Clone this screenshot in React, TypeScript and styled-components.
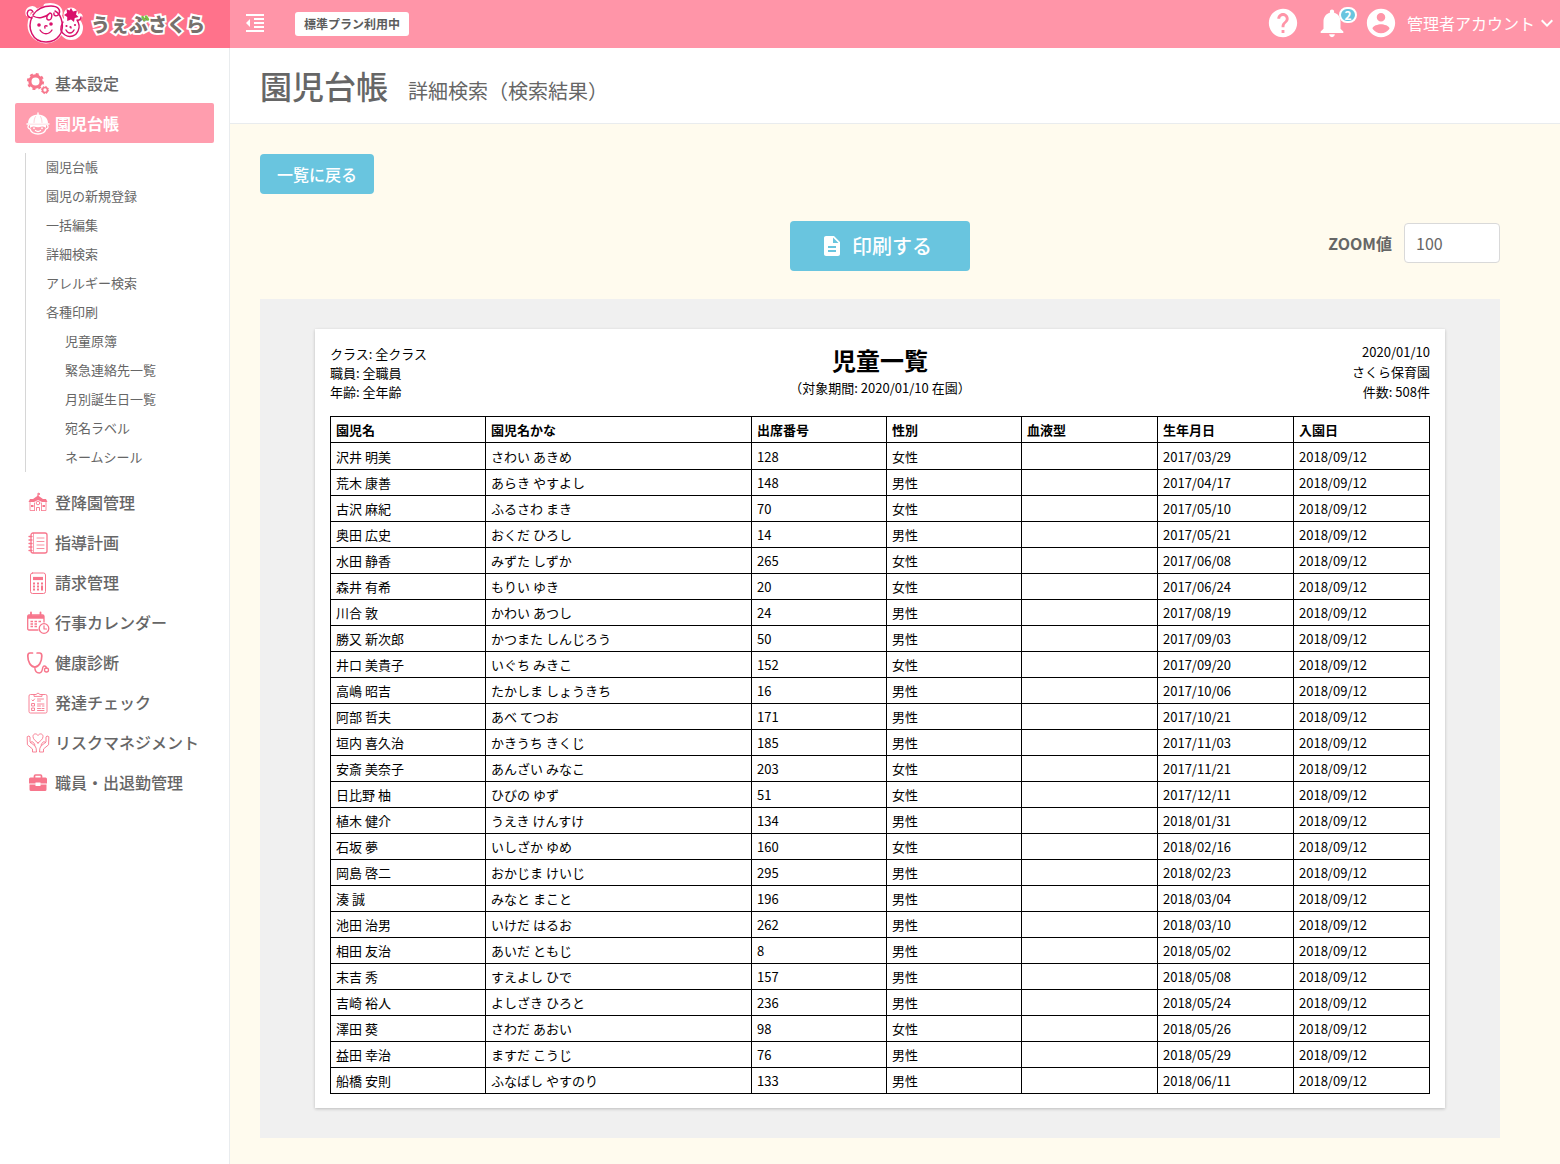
import React, { useState } from 'react';
import styled, { createGlobalStyle, css } from 'styled-components';

const color = {
  brand: '#ff728b',
  header: '#ff95a8',
  active: '#ff9dae',
  icon: '#f7768c',
  blue: '#69c5df',
  text: '#666',
  cream: '#fffbee',
  line: '#e9ecee',
};

const GlobalStyle = createGlobalStyle`
  *, *::before, *::after { box-sizing: border-box; }
  body {
    margin: 0;
    background: #fff;
    color: ${color.text};
    font-family: 'Noto Sans CJK JP', 'Liberation Sans', sans-serif;
    font-size: 16px;
  }
  button, input { font: inherit; color: inherit; }
  a { color: inherit; text-decoration: none; }
`;

/* ---------- header ---------- */

const Header = styled.header`
  display: flex;
  height: 48px;
  background: ${color.header};
  color: #fff;
`;

const Brand = styled.a`
  display: flex;
  align-items: center;
  gap: 8px;
  width: 230px;
  padding-left: 25px;
  background: ${color.brand};
`;

const BrandName = styled.span`
  position: relative;
  font-size: 19px;
  line-height: 28px;
  font-weight: 900;
  color: #77706c;
  -webkit-text-stroke: 4px #fff;
  paint-order: stroke fill;
`;

const Leaf = styled.svg`
  position: absolute;
  left: 50px;
  top: 5px;
`;

const HeaderBar = styled.div`
  flex: 1;
  display: flex;
  align-items: center;
  padding: 0 1px 2px 13px;
`;

const IconButton = styled.button`
  position: relative;
  display: flex;
  padding: 0;
  border: 0;
  background: none;
  cursor: pointer;
`;

const PlanButton = styled.button`
  height: 24px;
  margin: 2px auto 0 28px;
  padding: 0 9px;
  border: 0;
  border-radius: 3px;
  background: #fff;
  color: #5c5c5c;
  font-size: 12px;
  line-height: 24px;
  font-weight: 700;
`;

const HeaderTools = styled.div`
  display: flex;
  align-items: center;
  gap: 15px;
`;

const Count = styled.span`
  position: absolute;
  top: 1px;
  right: -8px;
  width: 18px;
  height: 16px;
  border: 2px solid #fff;
  border-radius: 8px;
  background: ${color.blue};
  font-size: 12px;
  line-height: 12px;
  font-weight: 700;
  text-align: center;
  color: #fff;
`;

const Account = styled.button`
  display: flex;
  align-items: center;
  padding: 0;
  border: 0;
  background: none;
  color: #fff;
  line-height: 24px;
`;

const AccountName = styled.span`
  margin-left: 9px;
`;

/* ---------- frame ---------- */

const Body = styled.div`
  display: flex;
  min-height: calc(100vh - 48px);
`;

const Sidebar = styled.nav`
  flex: none;
  width: 230px;
  padding: 15px;
  border-right: 1px solid ${color.line};
  background: #fff;
`;

const Menu = styled.ul`
  margin: 0;
  padding: 0;
  list-style: none;
`;

const MenuLink = styled.a<{ $active?: boolean }>`
  display: flex;
  align-items: center;
  gap: 6px;
  height: 40px;
  padding-left: 12px;
  border-radius: 2px;
  line-height: 24px;
  font-weight: 500;
  white-space: nowrap;
  ${(p) =>
    p.$active &&
    css`
      background: ${color.active};
      color: #fff;
      font-weight: 700;
    `}
`;

const SubMenu = styled.ul`
  margin: 10px 0 10px 10px;
  padding: 0;
  border-left: 1px solid #d6d6d6;
  list-style: none;
`;

const SubLink = styled.a<{ $nested?: boolean }>`
  display: block;
  padding: 0 0 2px ${(p) => (p.$nested ? 39 : 20)}px;
  font-size: 13px;
  line-height: 27px;
`;

const MenuIcon = styled.svg`
  flex: none;
  width: 22px;
  height: 22px;
  overflow: visible;
  fill: none;
  stroke: currentColor;
  stroke-linecap: round;
  stroke-linejoin: round;
`;

const IconTint = styled.span<{ $active?: boolean }>`
  display: flex;
  padding-top: 2px;
  color: ${(p) => (p.$active ? '#fff' : color.icon)};
`;

/* ---------- page ---------- */

const Main = styled.main`
  flex: 1;
  min-width: 0;
  background: ${color.cream};
`;

const PageHead = styled.div`
  display: flex;
  align-items: baseline;
  gap: 20px;
  height: 76px;
  padding: 13px 30px 0;
  border-bottom: 1px solid ${color.line};
  background: #fff;
`;

const PageTitle = styled.h1`
  margin: 0;
  font-size: 32px;
  line-height: 48px;
  font-weight: 500;
`;

const PageSubtitle = styled.span`
  font-size: 20px;
  line-height: 30px;
`;

const Content = styled.div`
  padding: 30px 60px 26px 30px;
`;

const BackButton = styled.button`
  height: 40px;
  padding: 0 17px;
  border: 0;
  border-radius: 4px;
  background: ${color.blue};
  color: #fff;
  line-height: 24px;
  font-weight: 500;
`;

const Toolbar = styled.div`
  display: grid;
  grid-template-columns: 1fr auto 1fr;
  align-items: center;
  margin: 27px 0 28px;
`;

const PrintButton = styled.button`
  grid-column: 2;
  display: flex;
  align-items: center;
  gap: 8px;
  width: 180px;
  height: 50px;
  padding: 0 30px;
  border: 0;
  border-radius: 4px;
  background: ${color.blue};
  color: #fff;
  font-size: 20px;
  line-height: 30px;
  font-weight: 500;
`;

const ZoomField = styled.label`
  justify-self: end;
  display: flex;
  align-items: center;
  gap: 12px;
  padding-bottom: 6px;
  font-weight: 700;
`;

const ZoomInput = styled.input`
  width: 96px;
  height: 40px;
  padding: 0 11px;
  border: 1px solid #d9d9d9;
  border-radius: 4px;
  background: #fff;
  font-weight: 400;
`;

const Preview = styled.section`
  padding: 30px 55px;
  background: #f0f0f0;
`;

const Paper = styled.article`
  padding: 13px 15px 14px;
  background: #fff;
  box-shadow: 0 1px 3px rgba(0, 0, 0, 0.22);
  color: #000;
  font-size: 13px;
`;

const PaperHead = styled.div`
  display: grid;
  grid-template-columns: 1fr auto 1fr;
  height: 60px;
  margin-bottom: 14px;
`;

const Conditions = styled.div`
  align-self: center;
  line-height: 19px;
`;

const Heading = styled.div`
  text-align: center;
  line-height: 20px;
`;

const PaperTitle = styled.h2`
  margin: 0;
  font-size: 24px;
  line-height: 36px;
  font-weight: 700;
`;

const Issuer = styled.div`
  text-align: right;
  line-height: 20px;
`;

const Table = styled.table`
  width: 100%;
  table-layout: fixed;
  border-collapse: collapse;
  line-height: 20px;

  th, td {
    height: 26px;
    padding: 0 5px;
    border: 1px solid #000;
    text-align: left;
  }
  tbody tr:first-child td {
    height: 27px;
    padding-top: 2px;
  }
`;

const Col = styled.col<{ $w: number }>`
  width: ${(p) => p.$w}px;
`;

/* ---------- icons ---------- */

const Glyph = ({ d, size = 24 }: { d: string; size?: number }) => (
  <svg width={size} height={size} viewBox="0 0 24 24" fill="#fff" aria-hidden="true">
    <path d={d} />
  </svg>
);

const glyphs = {
  indent: 'M11 17h10v-2H11v2zm-8-5l4 4V8l-4 4zm0 9h18v-2H3v2zM3 3v2h18V3H3zm8 6h10V7H11v2zm0 4h10v-2H11v2z',
  help: 'M12 2C6.48 2 2 6.48 2 12s4.48 10 10 10 10-4.48 10-10S17.52 2 12 2zm1 17h-2v-2h2v2zm2.07-7.75l-.9.92C13.45 12.9 13 13.5 13 15h-2v-.5c0-1.1.45-2.1 1.17-2.83l1.24-1.26c.37-.36.59-.86.59-1.41 0-1.1-.9-2-2-2s-2 .9-2 2H8c0-2.21 1.79-4 4-4s4 1.79 4 4c0 .88-.36 1.68-.93 2.25z',
  bell: 'M12 22c1.1 0 2-.9 2-2h-4c0 1.1.89 2 2 2zm6-6v-5c0-3.07-1.64-5.64-4.5-6.32V4c0-.83-.67-1.5-1.5-1.5s-1.5.67-1.5 1.5v.68C7.63 5.36 6 7.92 6 11v5l-2 2v1h16v-1l-2-2z',
  account: 'M12 2C6.48 2 2 6.48 2 12s4.48 10 10 10 10-4.48 10-10S17.52 2 12 2zm0 3c1.66 0 3 1.34 3 3s-1.34 3-3 3-3-1.34-3-3 1.34-3 3-3zm0 14.2c-2.5 0-4.71-1.28-6-3.22.03-1.99 4-3.08 6-3.08 1.99 0 5.97 1.09 6 3.08-1.29 1.94-3.5 3.22-6 3.22z',
  expand: 'M16.59 8.59L12 13.17 7.41 8.59 6 10l6 6 6-6z',
  document: 'M14 2H6c-1.1 0-1.99.9-1.99 2L4 20c0 1.1.89 2 1.99 2H18c1.1 0 2-.9 2-2V8l-6-6zm2 16H8v-2h8v2zm0-4H8v-2h8v2zm-3-5V3.5L18.5 9H13z',
};

const BrandMark = () => (
  <svg width="58" height="44" viewBox="0 0 58 44" fill="none" strokeLinecap="round" aria-hidden="true">
    <g stroke="#fff" strokeWidth="5" fill="#fff">
      <circle cx="21" cy="23" r="16" />
      <circle cx="46" cy="26" r="9.5" />
      <path d="M3 12c-1-5 5-7 7-4M21 4c8-2 15 2 14 8M55 14l-3 3" />
      <circle cx="46" cy="13" r="5" />
    </g>
    <g stroke="#d9116b" strokeWidth="1.4">
      <path d="M7 15c-5 11 0 25 14 25 12 0 18-10 16-20-1-5-3-9-7-11" />
      <path d="M7 16c-4 0-6-4-4-7 2-2 4-1 5 1M8 13c4-6 11-9 18-9 7 0 10 4 8 8-2 3-6 2-5-1M8 14c5 3 12 2 17-3 3 0 2 7-1 7-3 0-3-4 0-6" />
      <path d="M38 20c-3 5-3 10 2 13 5 3 11 1 13-4 2-4 1-8-1-11M52 18c2 1 4-1 4-3" />
      <path d="M15 28c3 5 9 5 12 0M41 28c2 4 6 4 8 0M20 26q-1-3 2-2M45 25q1-1 1 1" />
    </g>
    <g fill="#d9116b">
      <circle cx="14" cy="23" r="1.800" />
      <circle cx="26" cy="22" r="1.800" />
      <circle cx="41.500" cy="24" r="1.100" />
      <circle cx="50" cy="23" r="1.100" />
      <path d="M46 6l2 3.500 4-1-1 4 2.500 2.500-3.800 1-.7 4-3-2.500-3.800 1.500v-4L39 13l3-2-.5-4 3 1.500z" />
    </g>
  </svg>
);

const icons = {
  gears: (
    <>
      <circle cx="8.500" cy="8.500" r="5.600" strokeWidth="3.200" />
      <circle cx="8.500" cy="8.500" r="7.600" strokeWidth="2" strokeDasharray="3 2.970" strokeLinecap="butt" />
      <circle cx="18" cy="17" r="2.500" strokeWidth="1.700" />
      <circle cx="18" cy="17" r="3.600" strokeWidth="1" strokeDasharray="1.500 1.320" strokeLinecap="butt" />
    </>
  ),
  child: (
    <>
      <path d="M1 10.500C1 5 5 1.500 11 1.500s10 3.500 10 9z" fill="currentColor" stroke="none" />
      <path d="M11 0v2M0 11h22" strokeWidth="1.400" />
      <path d="M8.500 3.500C7.500 5 7 7.500 7 9.500M13.500 3.500C14.500 5 15 7.500 15 9.500" stroke={color.active} strokeWidth=".5" />
      <path d="M2 12c-2 1-1 4 1 4 1 3 4 5 8 5s7-2 8-5c2 0 3-3 1-4" strokeWidth="1.300" />
      <path d="M3 12h16v3q-2-2-4-1.500-4 1.500-8 0Q5 13 3 15z" fill="currentColor" stroke="none" />
      <path d="M7 15v.5M15 15v.5" strokeWidth="1.600" />
      <path d="M8.500 17.500q2.500 2 5 0" strokeWidth="1.300" />
    </>
  ),
  school: (
    <>
      <path d="M11 5V1l2 1-2 1" strokeWidth="1" />
      <path d="M11 3.500L16 7h3l1.500 3H15l-4-2-4 2H1.500L3 7h3z" fill="currentColor" stroke="none" />
      <path d="M3 10.500V18.500h4.500M19 10.500V18.500h-4.500M7.500 11v7.500M14.500 11v7.500" strokeWidth=".8" />
      <path d="M4 14h2.500M15.500 14H18" strokeWidth="2" strokeLinecap="butt" />
      <circle cx="11" cy="11" r="1.800" strokeWidth=".9" />
      <path d="M9.500 18.500v-3h3v3" strokeWidth=".9" />
    </>
  ),
  notebook: (
    <>
      <rect x="4" y="1" width="16" height="20" rx="2" strokeWidth="1.300" />
      <path d="M6.500 1.500v19" strokeWidth=".7" />
      <path d="M2 4.500h3M2 8h3M2 11.500h3M2 15h3M2 18.500h3" strokeWidth="1.300" />
      <path d="M10 6h7M10 9.500h7M10 13h7M10 16.500h7" strokeWidth=".8" />
    </>
  ),
  calculator: (
    <>
      <rect x="3.500" y="1" width="15" height="20.500" rx="2" strokeWidth="1" />
      <path d="M6 6.500h10" strokeWidth="3.200" strokeLinecap="butt" />
      <path d="M6 11.500h2M10 11.500h2M14 11.500h2M6 14.500h2M10 14.500h2M6 17.500h2M10 17.500h2" strokeWidth="1.800" strokeLinecap="butt" />
      <path d="M15 13.500v5" strokeWidth="2" strokeLinecap="butt" />
    </>
  ),
  calendar: (
    <>
      <path d="M11 18H2Q.700 18 .700 16.500V4.500Q.700 3 2 3h13.500Q17 3 17 4.500V10" strokeWidth="1.300" />
      <path d="M1 5h16" strokeWidth="3.500" strokeLinecap="butt" />
      <path d="M4 .5v3M13.500 .5v3" strokeWidth="1.800" />
      <path d="M3.500 9.500h2.500M7.500 9.500H10M11.500 9.500H14M3.500 12h2.500M7.500 12H10M3.500 14.500h2.500M7.500 14.500H10" strokeWidth="1.700" strokeLinecap="butt" />
      <circle cx="17" cy="16.500" r="4.800" strokeWidth="1.300" />
      <path d="M17 13.800V17h2.500" strokeWidth="1.200" />
    </>
  ),
  stethoscope: (
    <>
      <path d="M5.500 1H3Q.800 1 .800 4c0 6 3 11 7 11s7-5 7-11q0-3-2.200-3h-2.500" strokeWidth="1.700" />
      <path d="M7.800 15c0 4 1.500 6 4.500 6 4.500 0 2-7 5-7 1.500 0 2 1 2 2" strokeWidth="1.400" />
      <circle cx="19.500" cy="18" r="2" strokeWidth="1.300" />
    </>
  ),
  checklist: (
    <>
      <path d="M7 2.500H3.500Q2 2.500 2 4v15.500Q2 21 3.500 21h15q1.500 0 1.500-1.500V4q0-1.500-1.500-1.500H15" strokeWidth=".9" />
      <path d="M7 4V2.500h2q2-3 4 0h2V4z" strokeWidth=".9" />
      <path d="M5 8l1 1 1.500-2" strokeWidth=".9" />
      <rect x="5" y="11.500" width="2.500" height="2.500" strokeWidth=".9" />
      <rect x="5" y="16" width="2.500" height="2.500" strokeWidth=".9" />
      <path d="M10.500 7h6M10.500 9h3M10.500 12h6.500M10.500 14h3M15.500 14h1.500M10.500 16.500h3M15 16.500h2M10.500 18.500h6.500" strokeWidth=".9" />
    </>
  ),
  care: (
    <>
      <path d="M11 11C8 8.500 6 7 6 4.500 6 1.500 9.500 1 11 3.500 12.500 1 16 1.500 16 4.500 16 7 14 8.500 11 11z" strokeWidth=".9" />
      <path d="M.500 4.500Q2.500 3 3 5v5l5 4q1.500 1.500 1.500 6H5.500v-3L.700 13zM3.500 10.500q1.500-2 3 0L8 13" strokeWidth=".9" />
      <path d="M21.500 4.500Q19.500 3 19 5v5l-5 4q-1.500 1.500-1.500 6h4v-3l4.800-4zM18.500 10.500q-1.500-2-3 0L14 13" strokeWidth=".9" />
    </>
  ),
  briefcase: (
    <>
      <path d="M7.500 6V4q0-1 1-1h5q1 0 1 1v2" strokeWidth="1.700" />
      <path d="M3.500 5.500h15Q20 5.500 20 7v4.500h-6.500v-1h-5v1H2V7Q2 5.500 3.500 5.500zM2.500 12.500h6V14h5v-1.500h6v5Q19.500 19 18 19H4q-1.500 0-1.500-1.500z" fill="currentColor" stroke="none" />
    </>
  ),
};

type IconName = keyof typeof icons;

/* ---------- data ---------- */

interface MenuEntry {
  icon: IconName;
  label: string;
  children?: { label: string; nested?: boolean }[];
}

const menu: MenuEntry[] = [
  { icon: 'gears', label: '基本設定' },
  {
    icon: 'child',
    label: '園児台帳',
    children: [
      { label: '園児台帳' },
      { label: '園児の新規登録' },
      { label: '一括編集' },
      { label: '詳細検索' },
      { label: 'アレルギー検索' },
      { label: '各種印刷' },
      { label: '児童原簿', nested: true },
      { label: '緊急連絡先一覧', nested: true },
      { label: '月別誕生日一覧', nested: true },
      { label: '宛名ラベル', nested: true },
      { label: 'ネームシール', nested: true },
    ],
  },
  { icon: 'school', label: '登降園管理' },
  { icon: 'notebook', label: '指導計画' },
  { icon: 'calculator', label: '請求管理' },
  { icon: 'calendar', label: '行事カレンダー' },
  { icon: 'stethoscope', label: '健康診断' },
  { icon: 'checklist', label: '発達チェック' },
  { icon: 'care', label: 'リスクマネジメント' },
  { icon: 'briefcase', label: '職員・出退勤管理' },
];

const columns = [
  { label: '園児名', width: 155 },
  { label: '園児名かな', width: 266 },
  { label: '出席番号', width: 135 },
  { label: '性別', width: 135 },
  { label: '血液型', width: 136 },
  { label: '生年月日', width: 136 },
  { label: '入園日', width: 136 },
];

const ENTRY_DATE = '2018/09/12';

const children: [string, string, number, string, string][] = [
  ['沢井 明美', 'さわい あきめ', 128, '女性', '2017/03/29'],
  ['荒木 康善', 'あらき やすよし', 148, '男性', '2017/04/17'],
  ['古沢 麻紀', 'ふるさわ まき', 70, '女性', '2017/05/10'],
  ['奥田 広史', 'おくだ ひろし', 14, '男性', '2017/05/21'],
  ['水田 静香', 'みずた しずか', 265, '女性', '2017/06/08'],
  ['森井 有希', 'もりい ゆき', 20, '女性', '2017/06/24'],
  ['川合 敦', 'かわい あつし', 24, '男性', '2017/08/19'],
  ['勝又 新次郎', 'かつまた しんじろう', 50, '男性', '2017/09/03'],
  ['井口 美貴子', 'いぐち みきこ', 152, '女性', '2017/09/20'],
  ['高嶋 昭吉', 'たかしま しょうきち', 16, '男性', '2017/10/06'],
  ['阿部 哲夫', 'あべ てつお', 171, '男性', '2017/10/21'],
  ['垣内 喜久治', 'かきうち きくじ', 185, '男性', '2017/11/03'],
  ['安斎 美奈子', 'あんざい みなこ', 203, '女性', '2017/11/21'],
  ['日比野 柚', 'ひびの ゆず', 51, '女性', '2017/12/11'],
  ['植木 健介', 'うえき けんすけ', 134, '男性', '2018/01/31'],
  ['石坂 夢', 'いしざか ゆめ', 160, '女性', '2018/02/16'],
  ['岡島 啓二', 'おかじま けいじ', 295, '男性', '2018/02/23'],
  ['湊 誠', 'みなと まこと', 196, '男性', '2018/03/04'],
  ['池田 治男', 'いけだ はるお', 262, '男性', '2018/03/10'],
  ['相田 友治', 'あいだ ともじ', 8, '男性', '2018/05/02'],
  ['末吉 秀', 'すえよし ひで', 157, '男性', '2018/05/08'],
  ['吉崎 裕人', 'よしざき ひろと', 236, '男性', '2018/05/24'],
  ['澤田 葵', 'さわだ あおい', 98, '女性', '2018/05/26'],
  ['益田 幸治', 'ますだ こうじ', 76, '男性', '2018/05/29'],
  ['船橋 安則', 'ふなばし やすのり', 133, '男性', '2018/06/11'],
];

export default function App() {
  const [zoom, setZoom] = useState('100');

  return (
    <>
      <GlobalStyle />
      <Header>
        <Brand href="#">
          <BrandMark />
          <BrandName>
            うぇぶさくら
            <Leaf width="9" height="7" viewBox="0 0 9 7" aria-hidden="true">
              <path d="M1.500 2l2 3M5 1.500l2 3" stroke="#7ac143" strokeWidth="2.400" strokeLinecap="round" />
            </Leaf>
          </BrandName>
        </Brand>
        <HeaderBar>
          <IconButton aria-label="メニュー">
            <Glyph d={glyphs.indent} />
          </IconButton>
          <PlanButton>標準プラン利用中</PlanButton>
          <HeaderTools>
            <IconButton aria-label="ヘルプ">
              <Glyph d={glyphs.help} size={34} />
            </IconButton>
            <IconButton aria-label="お知らせ">
              <Glyph d={glyphs.bell} size={34} />
              <Count>2</Count>
            </IconButton>
            <Account>
              <Glyph d={glyphs.account} size={34} />
              <AccountName>管理者アカウント</AccountName>
              <Glyph d={glyphs.expand} />
            </Account>
          </HeaderTools>
        </HeaderBar>
      </Header>
      <Body>
        <Sidebar>
          <Menu>
            {menu.map((entry) => (
              <li key={entry.label}>
                <MenuLink href="#" $active={!!entry.children}>
                  <IconTint $active={!!entry.children}>
                    <MenuIcon viewBox="0 0 22 22" aria-hidden="true">
                      {icons[entry.icon]}
                    </MenuIcon>
                  </IconTint>
                  {entry.label}
                </MenuLink>
                {entry.children && (
                  <SubMenu>
                    {entry.children.map((sub) => (
                      <li key={sub.label}>
                        <SubLink href="#" $nested={sub.nested}>
                          {sub.label}
                        </SubLink>
                      </li>
                    ))}
                  </SubMenu>
                )}
              </li>
            ))}
          </Menu>
        </Sidebar>
        <Main>
          <PageHead>
            <PageTitle>園児台帳</PageTitle>
            <PageSubtitle>詳細検索（検索結果）</PageSubtitle>
          </PageHead>
          <Content>
            <BackButton>一覧に戻る</BackButton>
            <Toolbar>
              <PrintButton>
                <Glyph d={glyphs.document} />
                印刷する
              </PrintButton>
              <ZoomField>
                ZOOM値
                <ZoomInput value={zoom} onChange={(e) => setZoom(e.target.value)} />
              </ZoomField>
            </Toolbar>
            <Preview>
              <Paper>
                <PaperHead>
                  <Conditions>
                    <div>クラス: 全クラス</div>
                    <div>職員: 全職員</div>
                    <div>年齢: 全年齢</div>
                  </Conditions>
                  <Heading>
                    <PaperTitle>児童一覧</PaperTitle>
                    <div>（対象期間: 2020/01/10 在園）</div>
                  </Heading>
                  <Issuer>
                    <div>2020/01/10</div>
                    <div>さくら保育園</div>
                    <div>件数: 508件</div>
                  </Issuer>
                </PaperHead>
                <Table>
                  <colgroup>
                    {columns.map((c) => (
                      <Col key={c.label} $w={c.width} />
                    ))}
                  </colgroup>
                  <thead>
                    <tr>
                      {columns.map((c) => (
                        <th key={c.label} scope="col">
                          {c.label}
                        </th>
                      ))}
                    </tr>
                  </thead>
                  <tbody>
                    {children.map(([name, kana, no, sex, birth]) => (
                      <tr key={no}>
                        <td>{name}</td>
                        <td>{kana}</td>
                        <td>{no}</td>
                        <td>{sex}</td>
                        <td />
                        <td>{birth}</td>
                        <td>{ENTRY_DATE}</td>
                      </tr>
                    ))}
                  </tbody>
                </Table>
              </Paper>
            </Preview>
          </Content>
        </Main>
      </Body>
    </>
  );
}
